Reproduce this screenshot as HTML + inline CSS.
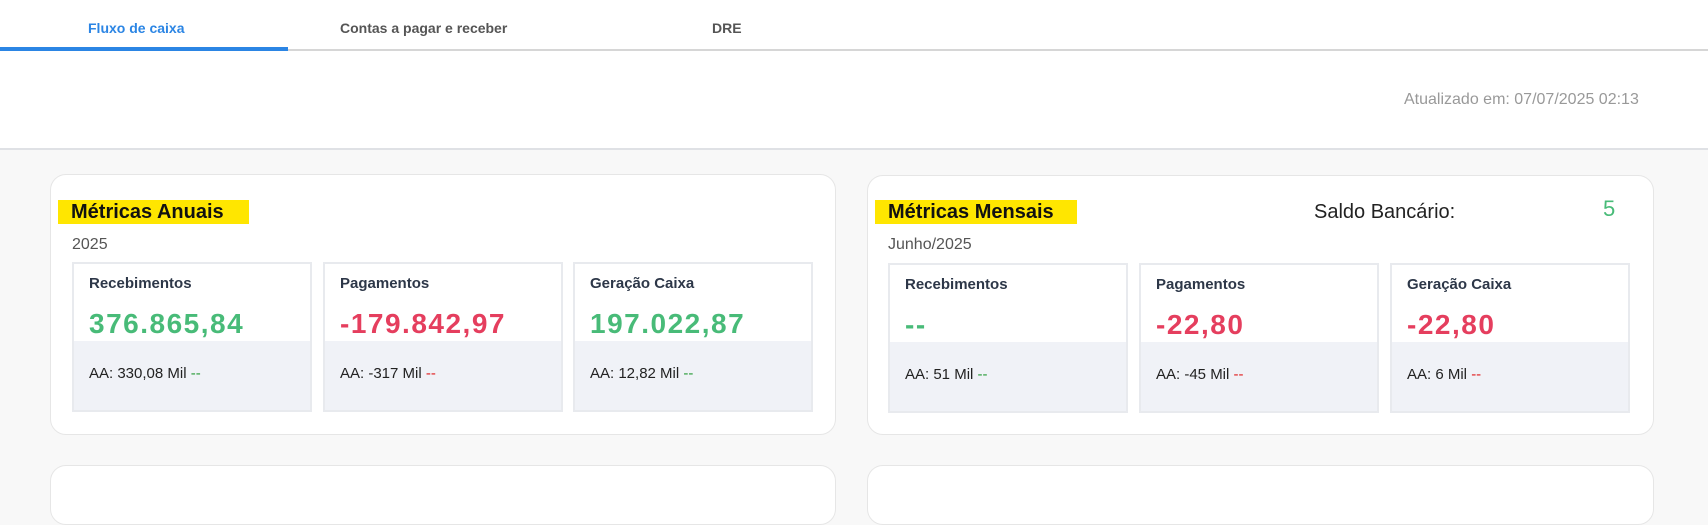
<!DOCTYPE html>
<html><head><meta charset="utf-8"><style>
*{box-sizing:border-box;margin:0;padding:0}
body{width:1708px;height:478px;overflow:hidden;background:#f8f8f8;font-family:"Liberation Sans",sans-serif;position:relative}
.abs{position:absolute;white-space:nowrap}
.top{position:absolute;left:0;top:0;width:1708px;height:150px;background:#fff;border-bottom:2px solid #dfe1e5}
.tabline{position:absolute;left:0;top:49px;width:1708px;height:2px;background:#d6d6d6}
.active{position:absolute;left:0;top:47px;width:288px;height:4px;background:#2b85e4}
.tab{font-size:14px;font-weight:bold;color:#555;top:20px}
.card{position:absolute;background:#fff;border:1px solid #e6e6e6;border-radius:16px}
.hl{position:absolute;background:#ffe600;height:24px;font-size:20px;font-weight:bold;color:#111;padding-left:13px;line-height:24px}
.sub{position:absolute;width:240px;height:150px;border:2px solid #e8eaee;background:#f0f2f7;top:262px}
.sub .w{background:#fff;height:77px}
.lbl{position:absolute;left:15px;top:11px;font-size:15px;font-weight:bold;color:#2d3748}
.val{position:absolute;left:15px;top:44px;font-size:28px;font-weight:bold;letter-spacing:1.5px}
.aa{position:absolute;left:15px;top:101px;font-size:15px;color:#222}
.g{color:#48bb78}.r{color:#e53e5e}.gd{color:#2a9d3a}.rd{color:#e02020}
.yr{font-size:16px;color:#555}
</style></head><body>
<div class="top">
<div class="tabline"></div><div class="active"></div>
<div class="abs tab" style="left:88px;color:#2b85e4">Fluxo de caixa</div>
<div class="abs tab" style="left:340px">Contas a pagar e receber</div>
<div class="abs tab" style="left:712px">DRE</div>
<div class="abs" style="left:1404px;top:91px;font-size:16px;color:#999">Atualizado em: 07/07/2025 02:13</div>
</div>

<div class="card" style="left:50px;top:174px;width:786px;height:261px"></div>
<div class="hl" style="left:58px;top:200px;width:191px">Métricas Anuais</div>
<div class="abs yr" style="left:72px;top:236px">2025</div>
<div class="sub" style="left:72px"><div class="w"></div><div class="lbl">Recebimentos</div><div class="val g">376.865,84</div><div class="aa">AA: 330,08 Mil <span class="gd">--</span></div></div>
<div class="sub" style="left:323px"><div class="w"></div><div class="lbl">Pagamentos</div><div class="val r">-179.842,97</div><div class="aa">AA: -317 Mil <span class="rd">--</span></div></div>
<div class="sub" style="left:573px"><div class="w"></div><div class="lbl">Geração Caixa</div><div class="val g">197.022,87</div><div class="aa">AA: 12,82 Mil <span class="gd">--</span></div></div>

<div class="card" style="left:867px;top:175px;width:787px;height:260px"></div>
<div class="hl" style="left:875px;top:200px;width:202px">Métricas Mensais</div>
<div class="abs" style="left:1314px;top:201px;font-size:20px;color:#222">Saldo Bancário:</div>
<div class="abs g" style="left:1603px;top:196px;font-size:22px">5</div>
<div class="abs yr" style="left:888px;top:236px">Junho/2025</div>
<div class="sub" style="left:888px;top:263px"><div class="w"></div><div class="lbl">Recebimentos</div><div class="val g">--</div><div class="aa">AA: 51 Mil <span class="gd">--</span></div></div>
<div class="sub" style="left:1139px;top:263px"><div class="w"></div><div class="lbl">Pagamentos</div><div class="val r">-22,80</div><div class="aa">AA: -45 Mil <span class="rd">--</span></div></div>
<div class="sub" style="left:1390px;top:263px"><div class="w"></div><div class="lbl">Geração Caixa</div><div class="val r">-22,80</div><div class="aa">AA: 6 Mil <span class="rd">--</span></div></div>

<div class="card" style="left:50px;top:465px;width:786px;height:60px"></div>
<div class="card" style="left:867px;top:465px;width:787px;height:60px"></div>
</body></html>
